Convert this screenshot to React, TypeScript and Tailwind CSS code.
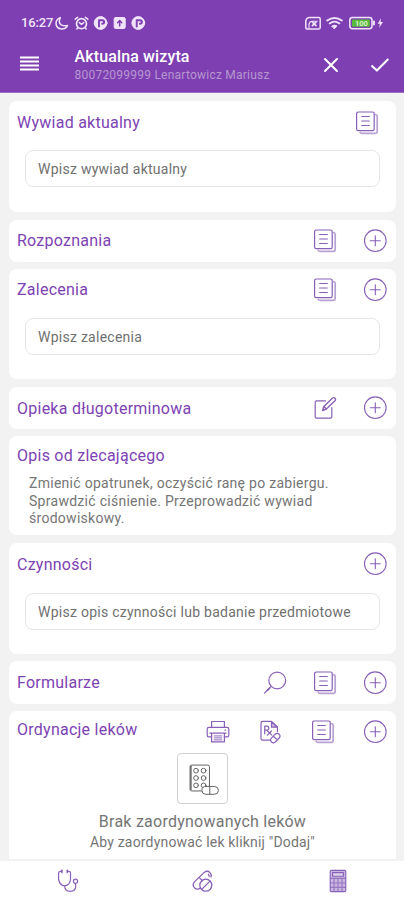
import type { ReactNode } from 'react';

interface IconProps {
  className?: string;
}

const line = {
  fill: 'none',
  stroke: 'currentColor',
  strokeLinecap: 'round',
  strokeLinejoin: 'round',
} as const;

function NotesIcon({ className = '' }: IconProps) {
  return (
    <svg viewBox="0 0 24 24" className={`w-6 h-6 ${className}`} {...line} strokeWidth={1.2}>
      <rect x="1.6" y="1" width="17.6" height="18.6" rx="1.6" />
      <path d="M6.7 5.5h7.6M6.7 10h7.6M6.7 14.5h7.6" />
      <path d="M20.8 3.6q1.4.3 1.4 1.8v15.4q0 1.6-1.6 1.6H7q-1.4 0-1.8-.9" strokeWidth={1.7} opacity={0.6} />
    </svg>
  );
}

function PlusIcon({ className = '' }: IconProps) {
  return (
    <svg viewBox="0 0 24 24" className={`w-6 h-6 ${className}`} {...line} strokeWidth={1.1}>
      <circle cx="12.3" cy="11.7" r="10.8" />
      <path d="M12.3 6.7v10M7.3 11.7h10" />
    </svg>
  );
}

function EditIcon() {
  return (
    <svg viewBox="0 0 24 24" className="w-6 h-6" {...line} strokeWidth={1.2}>
      <path d="M12.5 4.9H3.6q-1.4 0-1.4 1.4v14.4q0 1.4 1.4 1.4h13.8q1.4 0 1.4-1.4v-9" />
      <path d="M9.6 14.5l1.2-4L19.6 2q1.3-.8 2.4.2 1 1.2.2 2.3L13.4 13.1zM10.8 10.5l2.6 2.6" strokeWidth={1.4} />
    </svg>
  );
}

function SearchIcon() {
  return (
    <svg viewBox="0 0 24 24" className="w-6 h-6" {...line} strokeWidth={1.2}>
      <circle cx="14.2" cy="9.5" r="8.4" />
      <path d="M8.2 15.4l-6.8 6.8" />
      <path d="M6.6 17.1l-2.3 2.3" strokeWidth={1.8} />
    </svg>
  );
}

function PrinterIcon() {
  return (
    <svg viewBox="0 0 24 24" className="w-6 h-6" {...line} strokeWidth={1.2}>
      <path d="M5.6 7.3V1.5h12.8v5.8" />
      <path d="M5.6 16.8H2.8q-1.6 0-1.6-1.6V9q0-1.7 1.7-1.7h18.2q1.7 0 1.7 1.7v6.2q0 1.6-1.6 1.6h-2.8" />
      <path d="M4 13.2h16M5.6 13.2v8.7h12.8v-8.7" />
      <path d="M8.2 15.8h7.6M8.2 17.8h7.6M8.2 19.8h7.6" opacity={0.75} />
      <path d="M19 10.2h.6" />
    </svg>
  );
}

function PrescriptionIcon() {
  return (
    <svg viewBox="0 0 24 24" className="w-6 h-6" {...line} strokeWidth={1.2}>
      <path d="M11.6 20.2H4.6Q3 20.2 3 18.6V3q0-1.6 1.6-1.6h8.9L19.4 7v4.6" />
      <path d="M13.5 1.6v5.6h5.7z" fill="currentColor" fillOpacity={0.4} />
      <path d="M6.7 13.8V6.2h2.2q2 .2 2 2t-2 2H6.7M8.8 10.2l5 5M13.4 11l-3.9 4.2" />
      <path d="M13.4 18.2l3.8-4q2-1.8 4 0 1.7 1.9 0 3.8l-3.9 4q-1.9 1.6-3.8 0-1.8-1.9-.1-3.8zM15.3 16.2l3.9 3.7" />
    </svg>
  );
}

function BlisterIcon() {
  return (
    <svg viewBox="0 0 50 50" className="w-[50px] h-[50px] text-[#606060]" {...line} strokeWidth={1}>
      <path d="M24.5 37.2H14q-1.7 0-1.7-1.7v-23q0-1.7 1.7-1.7h16.4q1.7 0 1.7 1.7v19.6" />
      <path d="M13.2 12v23.8" strokeWidth={1.4} />
      {[16.5, 24, 31.5].map((y) => (
        <g key={y}>
          <circle cx="18.4" cy={y} r="2.4" />
          <circle cx="26.1" cy={y} r="2.4" />
        </g>
      ))}
      <rect x="24.4" y="32.6" width="16.8" height="8" rx="4" fill="white" />
      <path d="M32.4 32.6v8" />
    </svg>
  );
}

function StethoscopeIcon() {
  return (
    <svg viewBox="0 0 24 24" className="w-6 h-6" {...line} strokeWidth={1.2}>
      <path d="M5.6 2.3H4.2Q2.6 2.5 2.6 4v6q.4 4.4 3.3 6.1 2.6 1.3 5.2 0 3.2-1.7 3.4-6.1V4q0-1.5-1.6-1.7h-1.4" />
      <path d="M5.9 1.3v2M11.3 1.3v2" strokeWidth={1.7} />
      <path d="M8.6 17q.4 5.3 5.4 5.4 5.6 0 5.8-5.4 0-1.6-.7-2.4" />
      <circle cx="19.5" cy="12.3" r="2.1" />
    </svg>
  );
}

function PillsIcon() {
  return (
    <svg viewBox="0 0 24 24" className="w-6 h-6" {...line} strokeWidth={1.3}>
      <path d="M9.2 19.2q-3 2-5.8-.5-2.4-2.8 0-5.8l9.8-9.5q2.9-2.3 5.7 0 1.9 2.1 1.1 4.7M8.3 8.6l3.2 3.1" />
      <circle cx="14.8" cy="16.2" r="6" />
      <path d="M10.7 20.4l8.3-8.3" />
      <path d="M17.3 5.3q1 .8.8 2" />
    </svg>
  );
}

function CalculatorIcon() {
  return (
    <svg viewBox="0 0 24 24" className="w-6 h-6" {...line} strokeWidth={1.1}>
      <rect x="4.2" y="1.4" width="15.6" height="21.2" rx="1.2" fill="currentColor" fillOpacity={0.45} />
      <rect x="6.6" y="3.6" width="10.8" height="3.6" fill="white" fillOpacity={0.4} />
      <path d="M4.5 9.4h15M4.5 14h15M4.5 18.4h15M8 9.4v13M12 9.4v13M16 9.4v13" opacity={0.75} />
    </svg>
  );
}

function StatusBar() {
  return (
    <div className="flex items-center h-[46px] pl-[21px] pr-5 text-[#f1e4fa]">
      <span className="w-[33px] text-[13px] font-medium tracking-[-0.15px] whitespace-nowrap">16:27</span>
      <svg viewBox="0 0 92 16" className="w-[92px] h-4" {...line}>
        <path d="M6.3 2.6q-2.4 4.8 1 7.3 2.6 1.6 6.2.5-1.4 3.6-5.9 3.5-5.4-.4-5.6-5.5.1-4.4 4.3-5.8z" strokeWidth={1.5} />
        <circle cx="27.5" cy="8.7" r="5" strokeWidth={1.7} />
        <path d="M21.2 4.2l2.4-1.9M33.8 4.2l-2.4-1.9M23.8 12.8l-1 1.2M31.2 12.8l1 1.2M25.3 7.5l2.2 1.8 2.3-1.8" strokeWidth={1.5} />
        <circle cx="46.6" cy="8" r="6.4" fill="currentColor" />
        <path d="M45 11.6V5.2h3.2q2 .2 2 1.9-.1 1.6-2 1.6" stroke="#7d3fb2" strokeWidth={1.9} />
        <rect x="60.2" y="2.5" width="11" height="11" rx="1.4" fill="currentColor" />
        <path d="M65.7 11V6M63.6 7.7l2.1-2.2 2.1 2.2" stroke="#7d3fb2" strokeWidth={1.5} />
        <circle cx="84.3" cy="8" r="6.4" fill="currentColor" />
        <path d="M82.7 11.6V5.2h3.2q2 .2 2 1.9-.1 1.6-2 1.6" stroke="#7d3fb2" strokeWidth={1.9} />
      </svg>
      <svg viewBox="0 0 80 16" className="w-20 h-4 ml-auto" {...line}>
        <path d="M4.6 2.6h10.2q1.4 0 1.4 1.2v8.8q0 1.4-1.2 1.4H3q-1.2 0-1.2-1.2V6q.2-2.6 2.8-3.4z" strokeWidth={1.5} />
        <path d="M5 13V9.6q.2-3.2 3.2-3.4h5" strokeWidth={1.1} />
        <path d="M8.4 7.2l3.6 3.4M12 7.2l-3.6 3.4" strokeWidth={1.7} />
        <path d="M23.2 5.5q7.3-5 14.6 0" strokeWidth={2} />
        <path d="M25.6 8.4q4.9-3.6 9.8 0" strokeWidth={1.8} />
        <path d="M28 11q2.5-1.9 5 0l-2.5 2.6z" fill="currentColor" strokeWidth={1} />
        <rect x="45.8" y="2.5" width="22.2" height="11.2" rx="2.6" strokeWidth={1.5} />
        <rect x="48" y="4.5" width="17.8" height="7.2" rx="0.8" fill="#58b839" stroke="none" />
        <path d="M69.9 6.4v3.2" strokeWidth={2} />
        <text x="57.4" y="10.9" textAnchor="middle" fontSize="7.5" fontWeight="700" fill="#d9f3cd" stroke="none">
          100
        </text>
        <path d="M77 3.2l-3.3 5.6h2.2l-.9 4.2 4-6h-2.4z" fill="currentColor" stroke="none" />
      </svg>
    </div>
  );
}

function Header() {
  return (
    <header className="h-[93px] bg-[#7d3fb2] border-b border-[#9d6bc7]">
      <StatusBar />
      <div className="flex items-center h-[36px] pl-5 pr-3.5 text-white">
        <svg viewBox="0 0 20 16" className="w-5 h-4 mt-0" {...line} strokeLinecap="butt" strokeWidth={2}>
          <path d="M0 1.5h19M0 5.5h19M0 9.5h19M0 13.5h19" />
        </svg>
        <div className="ml-[34.5px] flex-1 whitespace-nowrap">
          <h1 className="text-[16px] leading-[19px] mt-[3px] font-medium tracking-[0.13px]">Aktualna wizyta</h1>
          <p className="text-[12px] leading-[19px] tracking-[0.23px] text-[#b797d0]">
            80072099999 Lenartowicz Mariusz
          </p>
        </div>
        <svg viewBox="0 0 16 16" className="w-4 h-4 mt-0.5 mr-[-1px]" {...line} strokeWidth={2}>
          <path d="M2 2l12 12M14 2L2 14" />
        </svg>
        <svg viewBox="0 0 20 16" className="w-5 h-4 ml-8 mt-0.5" {...line} strokeLinecap="butt" strokeWidth={2.1}>
          <path d="M1.5 8.4l5.4 5.2L18.3 2" />
        </svg>
      </div>
    </header>
  );
}

interface CardProps {
  title: string;
  titleClass?: string;
  height: string;
  icons?: ReactNode;
  iconsClass?: string;
  children?: ReactNode;
}

function Card({ title, titleClass = '', height, icons, iconsClass = 'gap-[26px]', children }: CardProps) {
  return (
    <section className={`bg-white rounded-lg shrink-0 ${height}`}>
      <div className="flex items-center justify-between h-[41px] pl-2 pr-[9px]">
        <h2 className={`text-[16px] leading-5 tracking-[0.25px] text-[#7d43b3] whitespace-nowrap ${titleClass}`}>
          {title}
        </h2>
        <div className={`flex items-center text-[#8860b8] ${iconsClass}`}>{icons}</div>
      </div>
      {children}
    </section>
  );
}

function Field({ placeholder, className }: { placeholder: string; className: string }) {
  return (
    <input
      type="text"
      placeholder={placeholder}
      className={`block w-[355px] h-[37px] ml-4 px-3 rounded-lg border border-[#e6e6e6] text-[14px] tracking-[0.26px] placeholder:text-[#707070] ${className}`}
    />
  );
}

export default function App() {
  return (
    <div className="flex flex-col h-[900px] w-[404px] overflow-hidden bg-[#f2f2f2] font-['Roboto','Noto_Sans',sans-serif]">
      <Header />
      <main className="flex flex-col flex-1 min-h-0 pt-2 pl-[9px] pr-2">
        <Card
          title="Wywiad aktualny"
          titleClass="mt-0.5"
          height="h-[111px] mb-2"
          icons={<NotesIcon />}
          iconsClass="mr-2 mt-0.5"
        >
          <Field placeholder="Wpisz wywiad aktualny" className="mt-2" />
        </Card>
        <Card title="Rozpoznania" height="h-[42px] mb-[7px]" icons={<><NotesIcon /><PlusIcon /></>} />
        <Card title="Zalecenia" height="h-[110px] mb-2" icons={<><NotesIcon /><PlusIcon /></>}>
          <Field placeholder="Wpisz zalecenia" className="mt-2" />
        </Card>
        <Card
          title="Opieka długoterminowa"
          titleClass="mt-0.5"
          height="h-[42px] mb-[7px]"
          icons={<><EditIcon /><PlusIcon /></>}
        />
        <Card title="Opis od zlecającego" titleClass="-mt-0.5" height="h-[99px] mb-2">
          <p className="pl-5 -mt-[2px] text-[14px] leading-[17.5px] tracking-[0.28px] text-[#757575] whitespace-nowrap">
            Zmienić opatrunek, oczyścić ranę po zabiergu.
            <br />
            Sprawdzić ciśnienie. Przeprowadzić wywiad
            <br />
            środowiskowy.
          </p>
        </Card>
        <Card title="Czynności" titleClass="mt-0.5" height="h-[111px] mb-[7px]" icons={<PlusIcon />}>
          <Field placeholder="Wpisz opis czynności lub badanie przedmiotowe" className="mt-[9px]" />
        </Card>
        <Card
          title="Formularze"
          titleClass="mt-0.5"
          height="h-[43px] mb-[7px]"
          icons={<><SearchIcon /><NotesIcon /><PlusIcon /></>}
          iconsClass="gap-[26px] mt-0.5"
        />
        <Card
          title="Ordynacje leków"
          titleClass="-mt-1"
          height="h-[148px] rounded-b-none"
          icons={<><PrinterIcon /><PrescriptionIcon /><NotesIcon /><PlusIcon /></>}
          iconsClass="gap-[28.5px]"
        >
          <div className="flex flex-col items-center whitespace-nowrap text-[#757575]">
            <div className="flex items-center justify-center w-[51px] h-[51px] mt-px mr-px rounded border border-[#d0d0d0]">
              <BlisterIcon />
            </div>
            <p className="mt-2 text-[16px] leading-5 tracking-[0.24px]">Brak zaordynowanych leków</p>
            <p className="text-[14px] leading-[21px] tracking-[0.18px]">Aby zaordynować lek kliknij "Dodaj"</p>
          </div>
        </Card>
      </main>
      <nav className="flex items-center justify-between h-[39px] pl-14 pr-[54px] bg-white text-[#8860b8]">
        <StethoscopeIcon />
        <PillsIcon />
        <CalculatorIcon />
      </nav>
    </div>
  );
}
